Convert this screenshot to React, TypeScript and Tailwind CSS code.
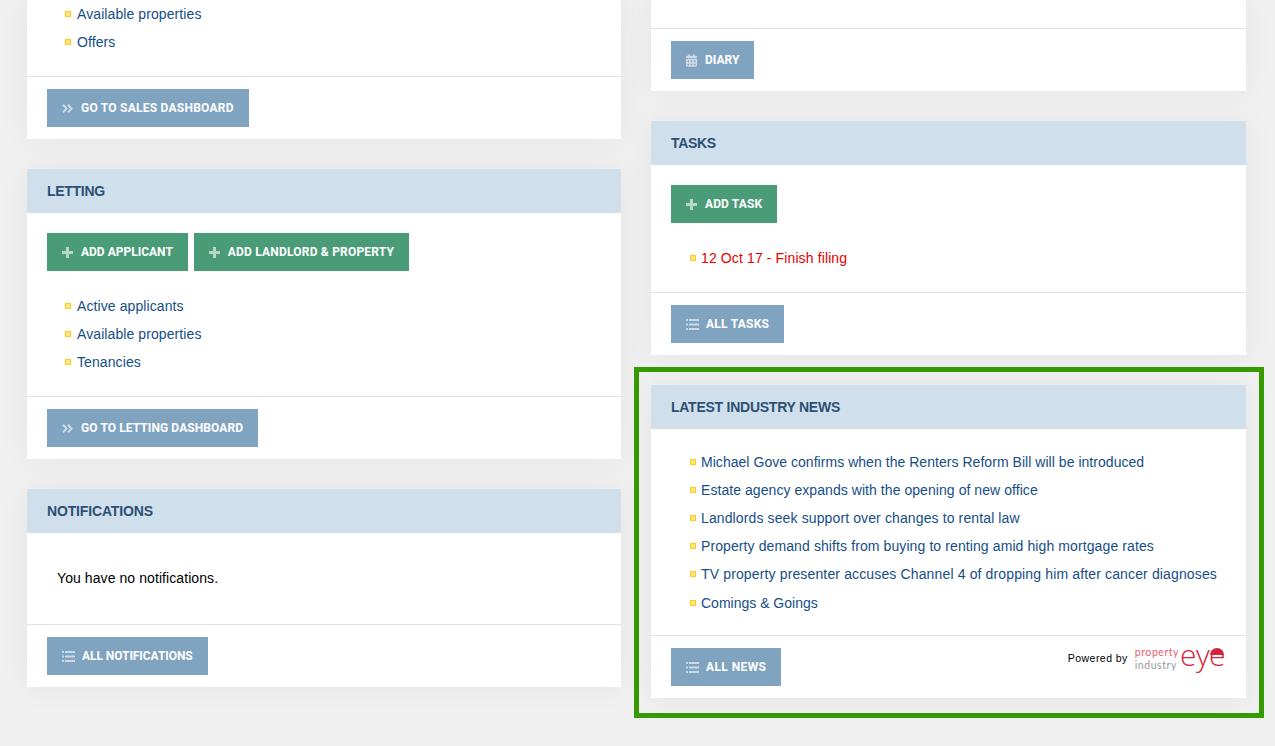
import type { ReactNode } from "react";
import { FaCalendarAlt } from "react-icons/fa";

function Btn({ icon, label, green, className = "" }: { icon: ReactNode; label: string; green?: boolean; className?: string }) {
  return (
    <a
      className={
        "inline-flex h-[38px] items-center px-[15px] font-['Roboto',sans-serif] text-[12px] font-bold uppercase text-white " +
        (green ? "bg-[#4a9c78] " : "bg-[#80a3bf] ") +
        className
      }
    >
      <span className="text-white/60">{icon}</span>
      {label}
    </a>
  );
}

function Row({ children, red, inset, className = "tracking-[0.09px]" }: { children: ReactNode; red?: boolean; inset?: boolean; className?: string }) {
  return (
    <li className={"flex h-[28px] items-center " + (inset ? "pl-[39px] " : "pl-[38px] ") + (red ? "text-[#e60000] " : "text-[#164e87] ") + className}>
      <span className={"h-[6px] w-[6px] shrink-0 border border-[#fdc921] bg-[#ffe77a] " + (inset ? "mr-[5px]" : "mr-[6px]")} />
      {children}
    </li>
  );
}

function Card({ title, titleClass = "tracking-[-0.3px]", children, footer }: { title?: string; titleClass?: string; children: ReactNode; footer: ReactNode }) {
  return (
    <section className="bg-white shadow-[0_0_30px_rgba(0,0,0,0.05)]">
      {title && (
        <h2 className={"flex h-[44px] items-center bg-[#cfe0ec] px-5 text-[14px] font-bold uppercase text-[#2e4f74] " + titleClass}>
          {title}
        </h2>
      )}
      {children}
      <div className="flex h-[63px] items-start justify-between border-t border-[#e2e2e2] pl-5 pt-3">{footer}</div>
    </section>
  );
}

const chevrons = (
  <svg viewBox="0 0 11 9" className="mr-[8px] h-[9px] w-[11px] fill-none stroke-current stroke-2">
    <path d="M1 .7l3.6 3.8L1 8.3M6 .7l3.6 3.8L6 8.3" />
  </svg>
);
const plus = (
  <svg viewBox="0 0 11 11" className="mr-[8px] h-[11px] w-[11px] fill-current">
    <path d="M4 0h3v4h4v3H7v4H4V7H0V4h4z" />
  </svg>
);
const list = (
  <svg viewBox="0 0 13 11" className="mr-[7px] h-[11px] w-[13px] fill-current">
    <path d="M0 0h2v2H0zM3 0h10v2H3zM0 4.5h2v2H0zM3 4.5h10v2H3zM0 9h2v2H0zM3 9h10v2H3z" />
  </svg>
);
const calendar = <FaCalendarAlt className="mr-[8px] h-[13px] w-[11px]" />;

export default function App() {
  return (
    <div className="h-[746px] overflow-hidden bg-[#f0f0f0] font-['Liberation_Sans',Arial,sans-serif] text-[14px]">
      <div className="ml-[27px] grid w-[1219px] grid-cols-[594px_595px] gap-x-[30px]">
        <div className="flex flex-col gap-[30px]">
          <Card footer={<Btn icon={chevrons} label="Go to sales dashboard" className="tracking-[0.24px]" />}>
            <ul className="h-[76px]">
              <Row>Available properties</Row>
              <Row>Offers</Row>
            </ul>
          </Card>

          <Card title="Letting" footer={<Btn icon={chevrons} label="Go to letting dashboard" className="tracking-[0.09px]" />}>
            <div className="flex gap-[6px] px-5 pt-5">
              <Btn green icon={plus} label="Add applicant" />
              <Btn green icon={plus} label="Add landlord & property" className="tracking-[0.2px]" />
            </div>
            <ul className="pb-5 pt-[21px]">
              <Row>Active applicants</Row>
              <Row>Available properties</Row>
              <Row>Tenancies</Row>
            </ul>
          </Card>

          <Card title="Notifications" titleClass="tracking-[-0.15px]" footer={<Btn icon={list} label="All notifications" className="tracking-[-0.06px]" />}>
            <div className="h-[91px] pl-[30px] pt-[37px] leading-4 tracking-[0.08px] text-black">You have no notifications.</div>
          </Card>
        </div>

        <div className="flex flex-col">
          <Card footer={<Btn icon={calendar} label="Diary" />}>
            <div className="h-[28px]" />
          </Card>

          <div className="mt-[30px]">
            <Card title="Tasks" footer={<Btn icon={list} label="All tasks" className="tracking-[0.25px]" />}>
              <div className="px-5 pt-5">
                <Btn green icon={plus} label="Add task" className="tracking-[0.12px]" />
              </div>
              <ul className="pb-5 pt-[21px]">
                <Row red inset className="tracking-[0.12px]">12 Oct 17 - Finish filing</Row>
              </ul>
            </Card>
          </div>

          <div className="-ml-[17px] -mr-[18px] mt-3 border-[5px] border-[#369a03] pb-[15px] pl-3 pr-[13px] pt-[13px]">
            <Card
              title="Latest industry news"
              titleClass="tracking-[-0.25px]"
              footer={
                <>
                  <Btn icon={list} label="All news" className="tracking-[0.4px]" />
                  <div className="flex items-start pr-[21px]">
                    <span className="mr-2 mt-[3px] text-[10.5px] leading-[14px] tracking-[0.45px] text-black">Powered by</span>
                    <div className="-ml-px -mt-[2px] font-['Lato',sans-serif] text-[10.5px] leading-[13px] tracking-[0.55px]">
                      <div className="text-[#e8606e]">property</div>
                      <div className="text-[#9a9a9a]">industry</div>
                    </div>
                    <div className="relative -mt-[8px] ml-[1px] font-['Open_Sans',sans-serif] text-[30px] font-light leading-[30px] tracking-[-0.6px] text-[#d6223a]">
                      eye
                      <span className="absolute right-[1px] top-[8px] h-[7px] w-[14px] rounded-t-full bg-[#d6223a]" />
                    </div>
                  </div>
                </>
              }
            >
              <ul className="pb-[18px] pt-[19px]">
                <Row inset className="tracking-[0.04px]">Michael Gove confirms when the Renters Reform Bill will be introduced</Row>
                <Row inset className="tracking-[0.06px]">Estate agency expands with the opening of new office</Row>
                <Row inset className="tracking-[0.12px]">Landlords seek support over changes to rental law</Row>
                <Row inset className="tracking-[0.1px]">Property demand shifts from buying to renting amid high mortgage rates</Row>
                <Row inset className="tracking-[0.14px]">TV property presenter accuses Channel 4 of dropping him after cancer diagnoses</Row>
                <li className="flex h-[29px] items-center pl-[39px] pt-[1px] text-[#164e87]">
                  <span className="mr-[5px] h-[6px] w-[6px] shrink-0 border border-[#fdc921] bg-[#ffe77a]" />
                  Comings &amp; Goings
                </li>
              </ul>
            </Card>
          </div>
        </div>
      </div>
    </div>
  );
}
